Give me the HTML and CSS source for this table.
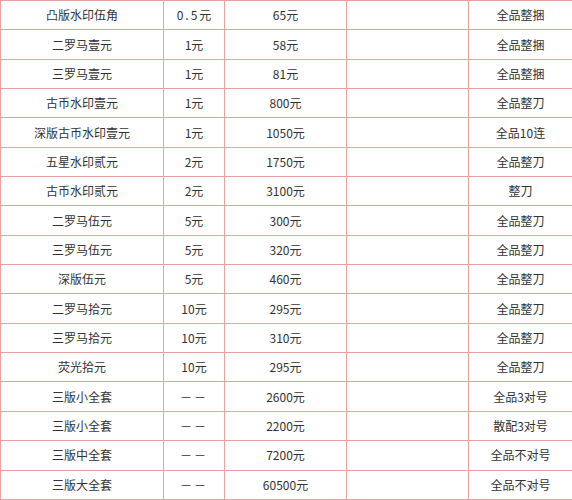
FILE: index.html
```html
<!DOCTYPE html>
<html lang="zh">
<head>
<meta charset="utf-8">
<link rel="stylesheet" href="styles.css">
</head>
<body>
<table class="price">
<colgroup><col class="c1"><col class="c2"><col class="c3"><col class="c4"><col class="c5"></colgroup>
<tbody>
<tr><td>凸版水印伍角</td><td><span class="wide">0.5</span>元</td><td>65元</td><td></td><td>全品整捆</td></tr>
<tr><td>二罗马壹元</td><td>1元</td><td>58元</td><td></td><td>全品整捆</td></tr>
<tr><td>三罗马壹元</td><td>1元</td><td>81元</td><td></td><td>全品整捆</td></tr>
<tr><td>古币水印壹元</td><td>1元</td><td>800元</td><td></td><td>全品整刀</td></tr>
<tr><td>深版古币水印壹元</td><td>1元</td><td>1050元</td><td></td><td>全品10连</td></tr>
<tr><td>五星水印贰元</td><td>2元</td><td>1750元</td><td></td><td>全品整刀</td></tr>
<tr><td>古币水印贰元</td><td>2元</td><td>3100元</td><td></td><td>整刀</td></tr>
<tr><td>二罗马伍元</td><td>5元</td><td>300元</td><td></td><td>全品整刀</td></tr>
<tr><td>三罗马伍元</td><td>5元</td><td>320元</td><td></td><td>全品整刀</td></tr>
<tr><td>深版伍元</td><td>5元</td><td>460元</td><td></td><td>全品整刀</td></tr>
<tr><td>二罗马拾元</td><td>10元</td><td>295元</td><td></td><td>全品整刀</td></tr>
<tr><td>三罗马拾元</td><td>10元</td><td>310元</td><td></td><td>全品整刀</td></tr>
<tr><td>荧光拾元</td><td>10元</td><td>295元</td><td></td><td>全品整刀</td></tr>
<tr><td>三版小全套</td><td class="dash">－－</td><td>2600元</td><td></td><td>全品3对号</td></tr>
<tr><td>三版小全套</td><td class="dash">－－</td><td>2200元</td><td></td><td>散配3对号</td></tr>
<tr><td>三版中全套</td><td class="dash">－－</td><td>7200元</td><td></td><td>全品不对号</td></tr>
<tr><td>三版大全套</td><td class="dash">－－</td><td>60500元</td><td></td><td>全品不对号</td></tr>
</tbody>
</table>
</body>
</html>
```
FILE: styles.css
```css
html, body {
  margin: 0;
  padding: 0;
  background: #ffffff;
}
.price {
  border-collapse: collapse;
  width: 572px;
  height: 500px;
  table-layout: fixed;
  font-family: "Noto Sans CJK SC", "Liberation Sans", sans-serif;
  font-size: 12px;
  color: #333333;
}
.c1 { width: 163px; }
.c2 { width: 61px; }
.c3 { width: 122px; }
.c4 { width: 122px; }
.c5 { width: 104px; }
.price td {
  border: 1px solid #e3a49e;
  text-align: center;
  vertical-align: middle;
  padding: 0;
  line-height: 14px;
}
.wide {
  letter-spacing: 2px;
}
.dash {
  letter-spacing: 2px;
}
```
